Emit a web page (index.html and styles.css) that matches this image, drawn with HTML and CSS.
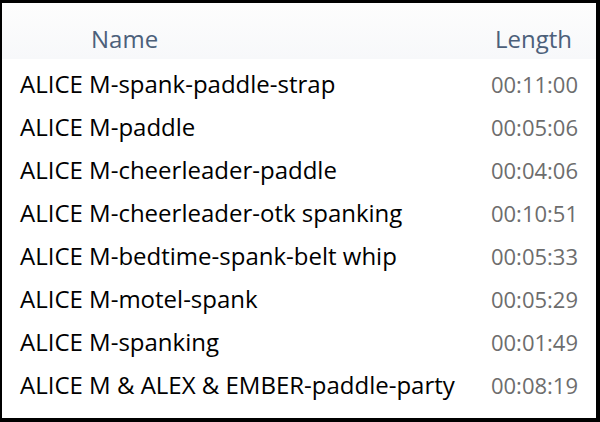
FILE: index.html
```html
<!DOCTYPE html>
<html lang="en">
<head>
  <meta charset="UTF-8">
  <title>Videos</title>
  <link rel="stylesheet" href="styles.css">
</head>
<body>
  <div class="frame">
    <div class="header">
      <div class="col-name">Name</div>
      <div class="col-length">Length</div>
    </div>

    <div class="list">
      <div class="row"><span class="name">ALICE M-spank-paddle-strap</span><span class="length">00:11:00</span></div>
      <div class="row"><span class="name">ALICE M-paddle</span><span class="length">00:05:06</span></div>
      <div class="row"><span class="name">ALICE M-cheerleader-paddle</span><span class="length">00:04:06</span></div>
      <div class="row"><span class="name">ALICE M-cheerleader-otk spanking</span><span class="length">00:10:51</span></div>
      <div class="row"><span class="name">ALICE M-bedtime-spank-belt whip</span><span class="length">00:05:33</span></div>
      <div class="row"><span class="name">ALICE M-motel-spank</span><span class="length">00:05:29</span></div>
      <div class="row"><span class="name">ALICE M-spanking</span><span class="length">00:01:49</span></div>
      <div class="row"><span class="name">ALICE M &amp; ALEX &amp; EMBER-paddle-party</span><span class="length">00:08:19</span></div>
    </div>
  </div>
</body>
</html>
```

FILE: styles.css
```css
html, body {
  margin: 0;
  padding: 0;
  background-color: #000;
}
body {
  font-family: "Open Sans", "Noto Sans", sans-serif;
  width: 600px;
  height: 422px;
  overflow: hidden;
}
.frame {
  box-sizing: border-box;
  width: 600px;
  height: 422px;
  border-style: solid;
  border-color: #000;
  border-width: 3px 4px 4px 2px;
  background-color: #fff;
}
.header {
  box-sizing: border-box;
  display: flex;
  align-items: center;
  height: 56px;
  padding-top: 14px;
  background: linear-gradient(#fdfdfd, #f7f8fa);
  color: #4c607a;
  font-size: 24px;
}
.col-name {
  flex: 1;
  padding-left: 89px;
}
.col-length {
  padding-right: 24px;
}
.list {
  padding-top: 3px;
}
.row {
  display: flex;
  justify-content: space-between;
  align-items: center;
  height: 43px;
  padding: 0 18px 0 18px;
  font-size: 24px;
}
.name {
  color: #000;
}
.length {
  color: #6d6d6d;
  font-size: 22px;
}
```
